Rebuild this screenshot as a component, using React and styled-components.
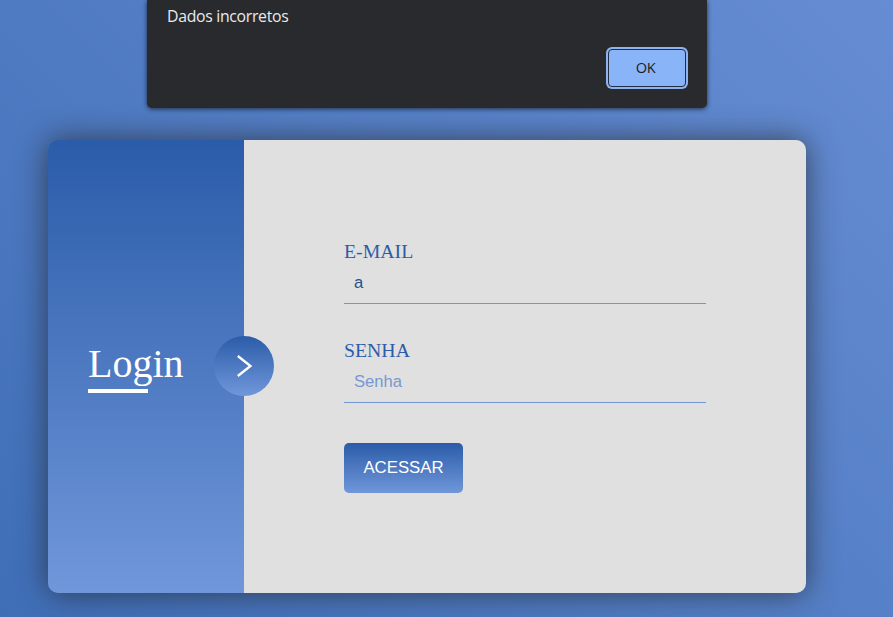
import React from "react";
import styled, { createGlobalStyle } from "styled-components";

const GlobalStyle = createGlobalStyle`
  * { box-sizing: border-box; }
  body { margin: 0; }
`;

const sideGradient = "linear-gradient(180deg, #2b5ca9 0%, #7097da 100%)";

const Page = styled.main`
  position: relative;
  height: 617px;
  padding: 140px 87px 24px 48px;
  overflow: hidden;
  background: linear-gradient(45deg, #3f6eb7 0%, #668dd3 100%);
`;

const Card = styled.section`
  display: grid;
  grid-template-columns: 196px 1fr;
  height: 453px;
  border-radius: 10px;
  background: linear-gradient(90deg, transparent 190px, #e0e0e0 190px);
  box-shadow: 0 0 30px rgba(34, 34, 34, 0.7);
`;

const Side = styled.div`
  position: relative;
  display: flex;
  flex-direction: column;
  justify-content: center;
  padding: 1px 0 0 40px;
  border-radius: 10px 0 0 10px;
  background: ${sideGradient};
`;

const Title = styled.h1`
  margin: 0;
  font: 400 40px/46px "Liberation Serif", serif;
  color: #fff;

  &::after {
    content: "";
    display: block;
    width: 60px;
    height: 4px;
    margin-top: 2px;
    background: #fff;
  }
`;

const ArrowBadge = styled.span`
  position: absolute;
  top: 196px;
  right: -30px;
  display: flex;
  align-items: center;
  justify-content: center;
  width: 60px;
  height: 60px;
  border-radius: 50%;
  background: ${sideGradient};
`;

const Form = styled.form`
  display: flex;
  flex-direction: column;
  align-items: flex-start;
  padding: 100px;
`;

const Field = styled.label`
  display: block;
  width: 100%;
  height: 64px;
  margin-bottom: ${(p) => p.$gap}px;
  border-bottom: 1px solid #7097cf;
`;

const FieldName = styled.span`
  display: block;
  font: 400 19.8px/23px "Liberation Serif", serif;
  color: #2b5ca9;
`;

const Input = styled.input`
  display: block;
  width: 100%;
  height: 40px;
  padding: 0 10px;
  border: 0;
  outline: 0;
  background: transparent;
  font: 400 16.64px "Liberation Sans", sans-serif;
  color: #294f8d;

  &::placeholder {
    color: #7897d3;
    opacity: 1;
  }
`;

const Submit = styled.button`
  width: 119px;
  height: 50px;
  padding: 0 0 1px;
  border: 0;
  border-radius: 5px;
  background: ${sideGradient};
  font: 400 16.8px "Liberation Sans", sans-serif;
  color: #fff;
`;

const Alert = styled.div`
  position: absolute;
  top: 0;
  left: 147px;
  display: flex;
  flex-direction: column;
  width: 560px;
  height: 107.5px;
  padding: 5px 20px 20px;
  border-radius: 0 0 5px 5px;
  background: #292a2d;
  box-shadow: 0 1px 5px rgba(0, 0, 0, 0.65);
  font-family: "Open Sans", sans-serif;
`;

const Message = styled.p`
  margin: 0;
  font-size: 15.8px;
  line-height: 22px;
  letter-spacing: -0.3px;
  color: #e8eaed;
`;

const OkButton = styled.button`
  align-self: flex-end;
  width: 78px;
  height: 38px;
  margin: 22px 1px 0 0;
  padding: 0 3px 3px 0;
  border: 1px solid #202d43;
  border-radius: 4px;
  background: #8ab4f8;
  box-shadow: 0 0 0 2px #8fb4ed;
  font: 400 14.6px "Open Sans", sans-serif;
  letter-spacing: -0.3px;
  color: #202124;
`;

export default function App() {
  return (
    <>
      <GlobalStyle />
      <Page>
        <Card>
          <Side>
            <Title>Login</Title>
            <ArrowBadge>
              <svg width="60" height="60" viewBox="0 0 60 60" fill="none">
                <path d="M23.8 20L36.5 30L23.8 40" stroke="#fff" strokeWidth="2.3" />
              </svg>
            </ArrowBadge>
          </Side>
          <Form onSubmit={(e) => e.preventDefault()}>
            <Field $gap={35}>
              <FieldName>E-MAIL</FieldName>
              <Input type="text" defaultValue="a" />
            </Field>
            <Field $gap={40}>
              <FieldName>SENHA</FieldName>
              <Input type="password" placeholder="Senha" />
            </Field>
            <Submit>ACESSAR</Submit>
          </Form>
        </Card>
        <Alert role="alertdialog">
          <Message>Dados incorretos</Message>
          <OkButton type="button">OK</OkButton>
        </Alert>
      </Page>
    </>
  );
}
